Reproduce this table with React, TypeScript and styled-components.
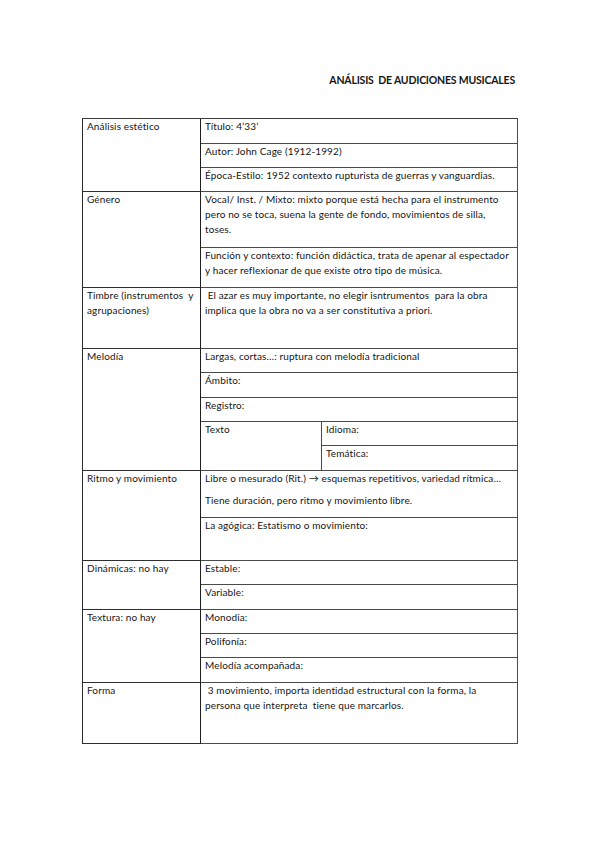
import React from "react";
import styled, { createGlobalStyle } from "styled-components";

const GlobalStyle = createGlobalStyle`
  html, body {
    margin: 0;
    padding: 0;
    background: #fff;
  }
  body {
    font-family: Lato, "Liberation Sans", sans-serif;
    color: #151515;
    font-variant-ligatures: none;
  }
`;

const Page = styled.div`
  width: 599px;
  min-height: 848px;
  padding-top: 72px;
  box-sizing: border-box;
`;

const Title = styled.h1`
  margin: 0 0 30px;
  padding-right: 84px;
  text-align: right;
  font-size: 10.5px;
  font-weight: 700;
  line-height: 16px;
  letter-spacing: -0.2px;
  white-space: pre;
`;

const Sheet = styled.div`
  margin-left: 82px;
  width: 436px;
  box-sizing: border-box;
  display: grid;
  grid-template-columns: 118px 121px 196px;
  grid-template-rows: 25px 24px 24px 56px 40px 61px 24px 25px 24px 24px 25px 47px 43px 24px 25px 24px 24px 25px 61px;
  border-top: 1px solid #3a3a3a;
  border-left: 1px solid #2a2a2a;
`;

interface CellProps {
  $row: number;
  $span?: number;
  $col?: number;
  $cols?: number;
}

const Cell = styled.div<CellProps>`
  grid-row: ${({ $row, $span = 1 }) => `${$row} / span ${$span}`};
  grid-column: ${({ $col = 2, $cols = 2 }) => `${$col} / span ${$cols}`};
  box-sizing: border-box;
  padding: 0 4px;
  border-right: 1px solid #4a4a4a;
  border-bottom: 1px solid #4a4a4a;
  font-size: 10px;
  letter-spacing: 0.12px;
  line-height: 15px;
  white-space: pre;
  overflow: hidden;
`;

const Label = styled(Cell).attrs({ $col: 1, $cols: 1 })`
  border-right: 1px solid #1f1f1f;
  border-bottom: 1px solid #2f2f2f;
`;

const Para = styled.p`
  margin: 0 0 7px;
`;

export default function App() {
  return (
    <Page>
      <GlobalStyle />
      <Title>{"ANÁLISIS  DE AUDICIONES MUSICALES"}</Title>
      <Sheet>
        <Label $row={1} $span={3}>Análisis estético</Label>
        <Cell $row={1}>Título: 4’33’</Cell>
        <Cell $row={2}>Autor: John Cage (1912-1992)</Cell>
        <Cell $row={3}>Época-Estilo: 1952 contexto rupturista de guerras y vanguardias.</Cell>

        <Label $row={4} $span={2}>Género</Label>
        <Cell $row={4}>
          {"Vocal/ Inst. / Mixto: mixto porque está hecha para el instrumento\npero no se toca, suena la gente de fondo, movimientos de silla,\ntoses."}
        </Cell>
        <Cell $row={5}>
          {"Función y contexto: función didáctica, trata de apenar al espectador\ny hacer reflexionar de que existe otro tipo de música."}
        </Cell>

        <Label $row={6}>{"Timbre (instrumentos  y\nagrupaciones)"}</Label>
        <Cell $row={6}>
          {" El azar es muy importante, no elegir isntrumentos  para la obra\nimplica que la obra no va a ser constitutiva a priori."}
        </Cell>

        <Label $row={7} $span={5}>Melodía</Label>
        <Cell $row={7}>Largas, cortas…: ruptura con melodía tradicional</Cell>
        <Cell $row={8}>Ámbito:</Cell>
        <Cell $row={9}>Registro:</Cell>
        <Cell $row={10} $span={2} $cols={1}>Texto</Cell>
        <Cell $row={10} $col={3} $cols={1}>Idioma:</Cell>
        <Cell $row={11} $col={3} $cols={1}>Temática:</Cell>

        <Label $row={12} $span={2}>Ritmo y movimiento</Label>
        <Cell $row={12}>
          <Para>Libre o mesurado (Rit.) → esquemas repetitivos, variedad rítmica…</Para>
          <Para>Tiene duración, pero ritmo y movimiento libre.</Para>
        </Cell>
        <Cell $row={13}>La agógica: Estatismo o movimiento:</Cell>

        <Label $row={14} $span={2}>Dinámicas: no hay</Label>
        <Cell $row={14}>Estable:</Cell>
        <Cell $row={15}>Variable:</Cell>

        <Label $row={16} $span={3}>Textura: no hay</Label>
        <Cell $row={16}>Monodia:</Cell>
        <Cell $row={17}>Polifonía:</Cell>
        <Cell $row={18}>Melodía acompañada:</Cell>

        <Label $row={19}>Forma</Label>
        <Cell $row={19}>
          {" 3 movimiento, importa identidad estructural con la forma, la\npersona que interpreta  tiene que marcarlos."}
        </Cell>
      </Sheet>
    </Page>
  );
}
